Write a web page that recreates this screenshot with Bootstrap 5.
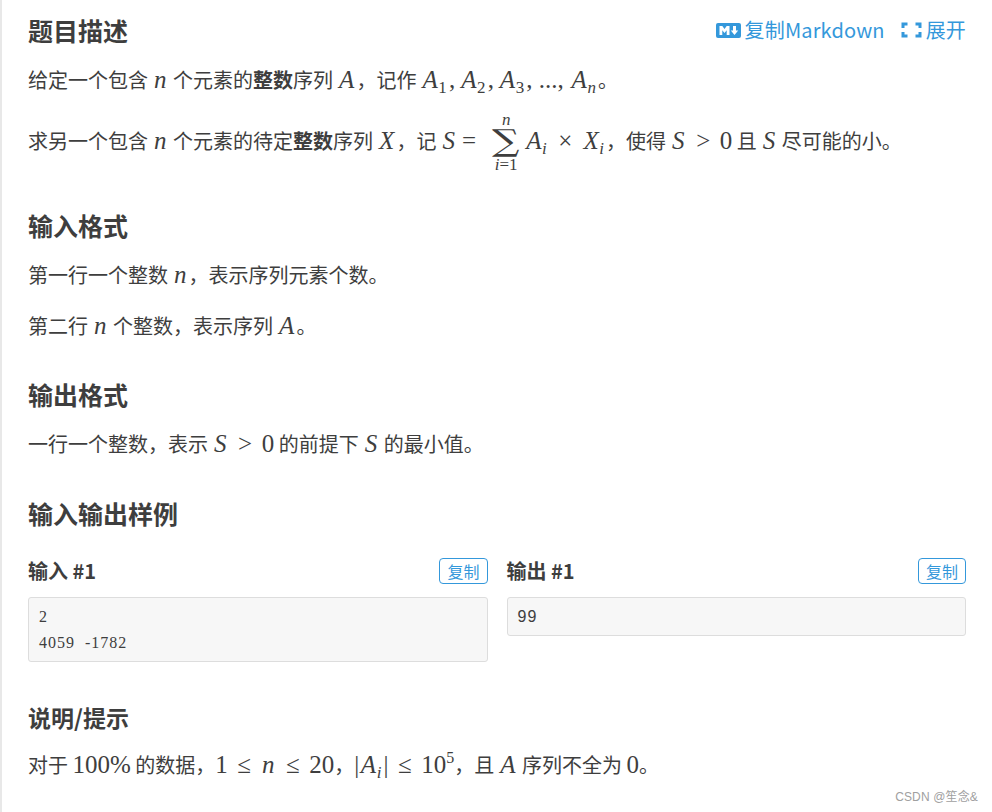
<!doctype html>
<html lang="zh-CN">
<head>
<meta charset="utf-8">
<title>题目描述</title>
<link href="https://cdn.jsdelivr.net/npm/bootstrap@5.3.0/dist/css/bootstrap.min.css" rel="stylesheet">
<style>
html,body{height:100%;overflow:hidden}
body{font-family:"Noto Sans CJK SC","Liberation Sans",sans-serif;color:#3e3e3e;background:#fff;font-size:20px;line-height:30px}
.sheet{height:812px;border-left:2px solid #e8e8e8;padding:13px 26px 0 26px;position:relative}
.sec-title{font-size:25px;font-weight:700;line-height:34px;margin:0;color:#3e3e3e}
.para{margin:0;white-space:nowrap}
.mi{font-family:"Liberation Serif",serif;font-style:italic;font-size:25px;padding:0 1.5px;letter-spacing:.6px}
.mr{font-family:"Liberation Serif",serif;font-size:25px}
.rel{margin:0 5px}
.mi sub,.mr sub,.lim{font-size:17px;line-height:0}
.mi sub{bottom:-.3em;font-style:italic}
.mi sub.up,.mr sub{font-style:normal}
.mi sup,.mr sup{font-size:16px;line-height:0;top:-.6em}
.sum{display:inline-flex;flex-direction:column;align-items:center;vertical-align:middle;font-family:"Liberation Serif",serif;line-height:1;margin:0 4px 0 6px;padding-bottom:2px;min-width:29px}
.sum .lim{line-height:16px;height:16px;white-space:nowrap}
.sum .sig{font-family:"DejaVu Serif",serif;font-size:30px;line-height:29px;height:29px;transform:translateY(-2px) scaleX(1.28)}
.tools a{color:#3498db;text-decoration:none;font-size:20px;line-height:28px;letter-spacing:.15px}
.p1{margin-top:18px}.p2{margin-top:17px}
.h2a{margin-top:33px}.h3a{margin-top:36px}.h4a{margin-top:37px}
.p3b{margin-top:18px}.p4{margin-top:21px}
.sample{margin-top:27px;--bs-gutter-x:19px}
.sample-label{font-size:20px;font-weight:700;line-height:28px;margin:0;color:#3e3e3e}
.copybtn{font-size:16px;line-height:20px;padding:2px 7px;border:1px solid #3498db;border-radius:4px;background:#fff;color:#3498db}
.copybtn:hover{background:#fff;color:#3498db}
.codebox{margin:12px 0 0;padding:6px 10px 5px;background:#f7f7f7;border:1px solid #ddd;border-radius:3px;font-family:"Liberation Serif",serif;font-size:16px;line-height:26px;color:#3e3e3e;letter-spacing:1px;word-spacing:5px}
.codebox.sans{font-family:"Liberation Sans",sans-serif}
.h5a{margin-top:38px;font-size:23px}.p5{margin-top:16px}
.stamp{position:absolute;right:14px;bottom:7px;font-size:12px;line-height:16px;color:#a0a0a0;letter-spacing:.15px;font-family:"Liberation Sans","Noto Sans CJK SC",sans-serif}
</style>
</head>
<body>
<div class="sheet">
  <div class="d-flex justify-content-between align-items-center">
    <h2 class="sec-title">题目描述</h2>
    <div class="tools d-flex align-items-center gap-3">
      <a href="#" class="d-inline-flex align-items-center gap-1">
        <svg width="25" height="15" viewBox="0 0 25 15" aria-hidden="true"><rect width="25" height="15" rx="2" fill="#3498db"/><path d="M3.500 12V3h2.800l2.200 3 2.200-3h2.800v9h-2.800V7.200L8.500 10 6.300 7.200V12zM17 3h3v4.500h2.200L18.500 12l-3.700-4.500H17z" fill="#fff"/></svg>
        <span>复制Markdown</span></a>
      <a href="#" class="d-inline-flex align-items-center gap-1">
        <svg width="21" height="16" viewBox="0 0 21 16" aria-hidden="true"><path d="M0.500 6V.5h6v3H3.500v2.500zM20.500 6V.5h-6v3h3v2.500zM0.500 10v5.500h6v-3H3.500V10zM20.500 10v5.500h-6v-3h3V10z" fill="#3498db"/></svg>
        <span>展开</span></a>
    </div>
  </div>

  <p class="para p1">给定一个包含 <span class="mi">n</span> 个元素的<strong>整数</strong>序列 <span class="mi">A</span>，记作 <span class="mi">A<sub class="up">1</sub></span><span class="mr">,</span> <span class="mi">A<sub class="up">2</sub></span><span class="mr">,</span> <span class="mi">A<sub class="up">3</sub></span><span class="mr">, ..., </span><span class="mi">A<sub>n</sub></span>。</p>

  <p class="para p2">求另一个包含 <span class="mi">n</span> 个元素的待定<strong>整数</strong>序列 <span class="mi">X</span>，记 <span class="mi">S</span><span class="mr rel">=</span> <span class="sum"><span class="lim"><i>n</i></span><span class="sig">∑</span><span class="lim"><i>i</i>=1</span></span><span class="mi">A<sub>i</sub></span> <span class="mr rel">×</span> <span class="mi">X<sub>i</sub></span>，使得 <span class="mi">S</span> <span class="mr rel">&gt;</span> <span class="mr">0</span> 且 <span class="mi">S</span> 尽可能的小。</p>

  <h2 class="sec-title h2a">输入格式</h2>
  <p class="para p3b">第一行一个整数 <span class="mi">n</span>，表示序列元素个数。</p>
  <p class="para p4">第二行 <span class="mi">n</span> 个整数，表示序列 <span class="mi">A</span>。</p>

  <h2 class="sec-title h3a">输出格式</h2>
  <p class="para p3b">一行一个整数，表示 <span class="mi">S</span> <span class="mr rel">&gt;</span> <span class="mr">0</span> 的前提下 <span class="mi">S</span> 的最小值。</p>

  <h2 class="sec-title h4a">输入输出样例</h2>

  <div class="row sample">
    <div class="col-6">
      <div class="d-flex justify-content-between align-items-center">
        <h3 class="sample-label">输入 #1</h3>
        <button class="btn copybtn" type="button">复制</button>
      </div>
      <pre class="codebox">2
4059 -1782</pre>
    </div>
    <div class="col-6">
      <div class="d-flex justify-content-between align-items-center">
        <h3 class="sample-label">输出 #1</h3>
        <button class="btn copybtn" type="button">复制</button>
      </div>
      <pre class="codebox sans">99</pre>
    </div>
  </div>

  <h2 class="sec-title h5a">说明/提示</h2>
  <p class="para p5">对于 <span class="mr">100%</span> 的数据，<span class="mr">1</span> <span class="mr rel">≤</span> <span class="mi">n</span> <span class="mr rel">≤</span> <span class="mr">20</span>，<span class="mr">|</span><span class="mi">A<sub>i</sub></span><span class="mr">|</span> <span class="mr rel">≤</span> <span class="mr">10<sup>5</sup></span>，且 <span class="mi">A</span> 序列不全为 <span class="mr">0</span>。</p>

  <div class="stamp">CSDN @笙念&amp;</div>
</div>
<script src="https://cdn.jsdelivr.net/npm/bootstrap@5.3.0/dist/js/bootstrap.bundle.min.js"></script>
</body>
</html>
